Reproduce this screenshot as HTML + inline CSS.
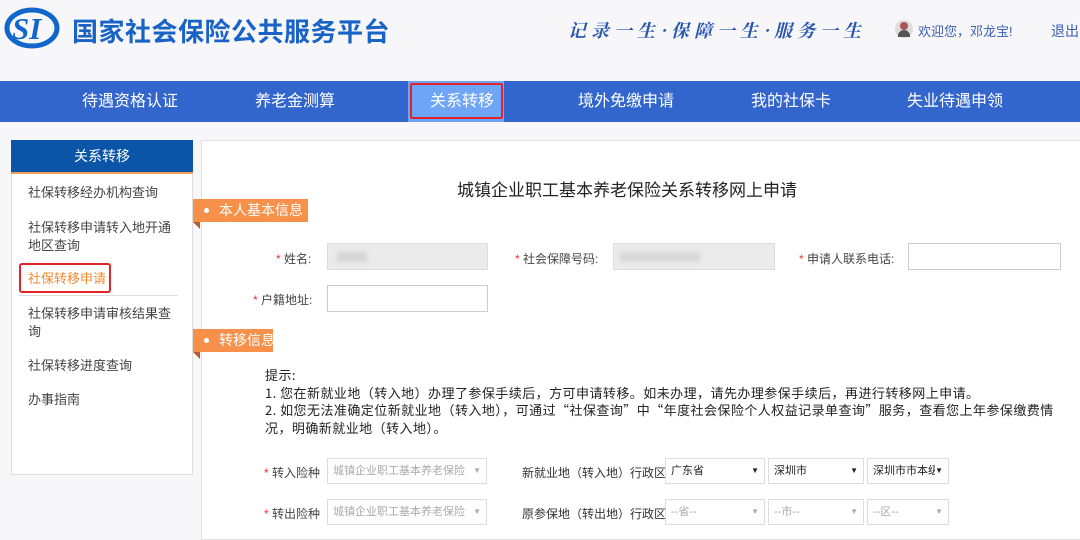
<!DOCTYPE html>
<html><head><meta charset="utf-8"><style>
*{margin:0;padding:0;box-sizing:border-box}
body{width:1080px;height:537px;overflow:hidden;background:#f7f7f9;font-family:"Liberation Sans","Noto Sans CJK SC",sans-serif;position:relative;color:#333}
.a{position:absolute;white-space:nowrap}
.nav{left:0;top:81px;width:1080px;height:41px;background:#3366cc}
.ni{top:81px;height:41px;line-height:41px;color:#fff;font-size:16px}
.side{left:11px;top:140px;width:182px;height:335px;background:#fff;border:1px solid #ddd}
.sh{left:11px;top:140px;width:182px;height:34px;background:#0b55a8;border-bottom:2px solid #f0a050;color:#fff;font-size:14px;text-align:center;line-height:33px}
.si{left:28px;font-size:13px;color:#444;line-height:18px}
.main{left:201px;top:140px;width:885px;height:400px;background:#fff;border:1px solid #e2e2e2}
.tag{background:#f6904a;color:#fff;font-size:14px;height:23px;line-height:23px;padding-left:26px}
.tag:before{content:"";position:absolute;left:11px;top:9px;width:5px;height:5px;border-radius:50%;background:#fff}
.tag:after{content:"";position:absolute;left:0;top:23px;border-top:7px solid #b06030;border-left:7px solid transparent}
.lb{font-size:12px;color:#444}
.st{color:#e33}
.in{height:27px;border:1px solid #ccc;background:#fff}
.g{background:#ebebeb;border-color:#ddd}
.sel{height:26px;border:1px solid #ddd;background:#fff;font-size:11px;line-height:24px;padding-left:5px;color:#222}
.sel b{position:absolute;right:5px;top:0;font-weight:normal;font-size:8px}
.d{color:#aaa}
</style></head><body>
<svg class="a" style="left:4px;top:6px" width="56" height="44" viewBox="0 0 56 44"><ellipse cx="28" cy="22" rx="25" ry="18" fill="none" stroke="#1166cc" stroke-width="5"/><text x="8" y="33" font-family="Liberation Serif" font-style="italic" font-weight="bold" font-size="31" fill="#1166cc">SI</text></svg>
<div class="a" style="left:72px;top:12px;font-size:26px;font-weight:bold;color:#1a63c6;letter-spacing:0.5px">国家社会保险公共服务平台</div>
<div class="a" style="left:568px;top:17px;font-size:18px;font-weight:bold;color:#2a58b0;font-style:italic;letter-spacing:5px;font-family:'Noto Serif CJK SC',serif">记录一生·保障一生·服务一生</div>
<div class="a" style="left:895px;top:20px;width:18px;height:18px;border-radius:50%;background:#ddd"><div style="position:absolute;left:5px;top:2px;width:8px;height:8px;border-radius:50%;background:#a55"></div><div style="position:absolute;left:3px;top:10px;width:12px;height:7px;border-radius:6px 6px 0 0;background:#555"></div></div>
<div class="a" style="left:918px;top:21px;font-size:13px;color:#3a5fb5">欢迎您，邓龙宝!</div>
<div class="a" style="left:1051px;top:21px;font-size:14px;color:#3a5fb5">退出</div>
<div class="a nav"></div>
<div class="a" style="left:408px;top:81px;width:96px;height:41px;background:#6fa5f7"></div>
<div class="a" style="left:410px;top:83px;width:93px;height:36px;border:2px solid #e0242a;border-radius:2px"></div>
<div class="a ni" style="left:82px">待遇资格认证</div>
<div class="a ni" style="left:255px">养老金测算</div>
<div class="a ni" style="left:430px">关系转移</div>
<div class="a ni" style="left:578px">境外免缴申请</div>
<div class="a ni" style="left:751px">我的社保卡</div>
<div class="a ni" style="left:907px">失业待遇申领</div>
<div class="a side"></div>
<div class="a sh">关系转移</div>
<div class="a si" style="top:184px">社保转移经办机构查询</div>
<div class="a si" style="top:219px">社保转移申请转入地开通<br>地区查询</div>
<div class="a si" style="top:270px;color:#f08a30">社保转移申请</div>
<div class="a" style="left:19px;top:263px;width:92px;height:30px;border:2px solid #e0242a;border-radius:3px"></div>
<div class="a" style="left:19px;top:295px;width:159px;height:1px;background:#ddd"></div>
<div class="a si" style="top:305px">社保转移申请审核结果查<br>询</div>
<div class="a si" style="top:357px">社保转移进度查询</div>
<div class="a si" style="top:391px">办事指南</div>
<div class="a main"></div>
<div class="a" style="left:457px;top:176px;font-size:17px;color:#222">城镇企业职工基本养老保险关系转移网上申请</div>
<div class="a tag" style="left:193px;top:199px;width:115px">本人基本信息</div>
<div class="a tag" style="left:193px;top:329px;width:80px">转移信息</div>
<div class="a lb" style="left:276px;top:250px"><span class="st">*</span> 姓名:</div>
<div class="a in g" style="left:327px;top:243px;width:161px"><div style="position:absolute;left:9px;top:8px;width:30px;height:10px;background:#d5d5d5;filter:blur(2px)"></div></div>
<div class="a lb" style="left:515px;top:250px"><span class="st">*</span> 社会保障号码:</div>
<div class="a in g" style="left:613px;top:243px;width:162px"><div style="position:absolute;left:6px;top:8px;width:80px;height:10px;background:#d8d8d8;filter:blur(2px)"></div></div>
<div class="a lb" style="left:799px;top:250px"><span class="st">*</span> 申请人联系电话:</div>
<div class="a in" style="left:908px;top:243px;width:153px"></div>
<div class="a lb" style="left:253px;top:291px"><span class="st">*</span> 户籍地址:</div>
<div class="a in" style="left:327px;top:285px;width:161px"></div>
<div class="a" style="left:265px;top:366px;font-size:13px;color:#222;line-height:17.5px;letter-spacing:0.45px;font-family:'Noto Sans CJK SC','Liberation Sans',sans-serif">提示:<br>1. 您在新就业地（转入地）办理了参保手续后，方可申请转移。如未办理，请先办理参保手续后，再进行转移网上申请。<br>2. 如您无法准确定位新就业地（转入地），可通过“社保查询”中“年度社会保险个人权益记录单查询”服务，查看您上年参保缴费情<br>况，明确新就业地（转入地）。</div>
<div class="a lb" style="left:264px;top:464px"><span class="st">*</span> 转入险种</div>
<div class="a sel g" style="left:327px;top:458px;width:160px;color:#aaa">城镇企业职工基本养老保险<b>▼</b></div>
<div class="a lb" style="left:264px;top:505px"><span class="st">*</span> 转出险种</div>
<div class="a sel g" style="left:327px;top:499px;width:160px;color:#aaa">城镇企业职工基本养老保险<b>▼</b></div>
<div class="a lb" style="left:522px;top:464px;color:#333">新就业地（转入地）行政区</div>
<div class="a lb" style="left:522px;top:505px;color:#333">原参保地（转出地）行政区</div>
<div class="a sel" style="left:665px;top:458px;width:100px">广东省<b>▼</b></div>
<div class="a sel" style="left:768px;top:458px;width:96px">深圳市<b>▼</b></div>
<div class="a sel" style="left:867px;top:458px;width:82px;overflow:hidden">深圳市市本级<b style="background:#fff">▼</b></div>
<div class="a sel d" style="left:665px;top:499px;width:100px">--省--<b>▼</b></div>
<div class="a sel d" style="left:768px;top:499px;width:96px">--市--<b>▼</b></div>
<div class="a sel d" style="left:867px;top:499px;width:82px">--区--<b>▼</b></div>
</body></html>
